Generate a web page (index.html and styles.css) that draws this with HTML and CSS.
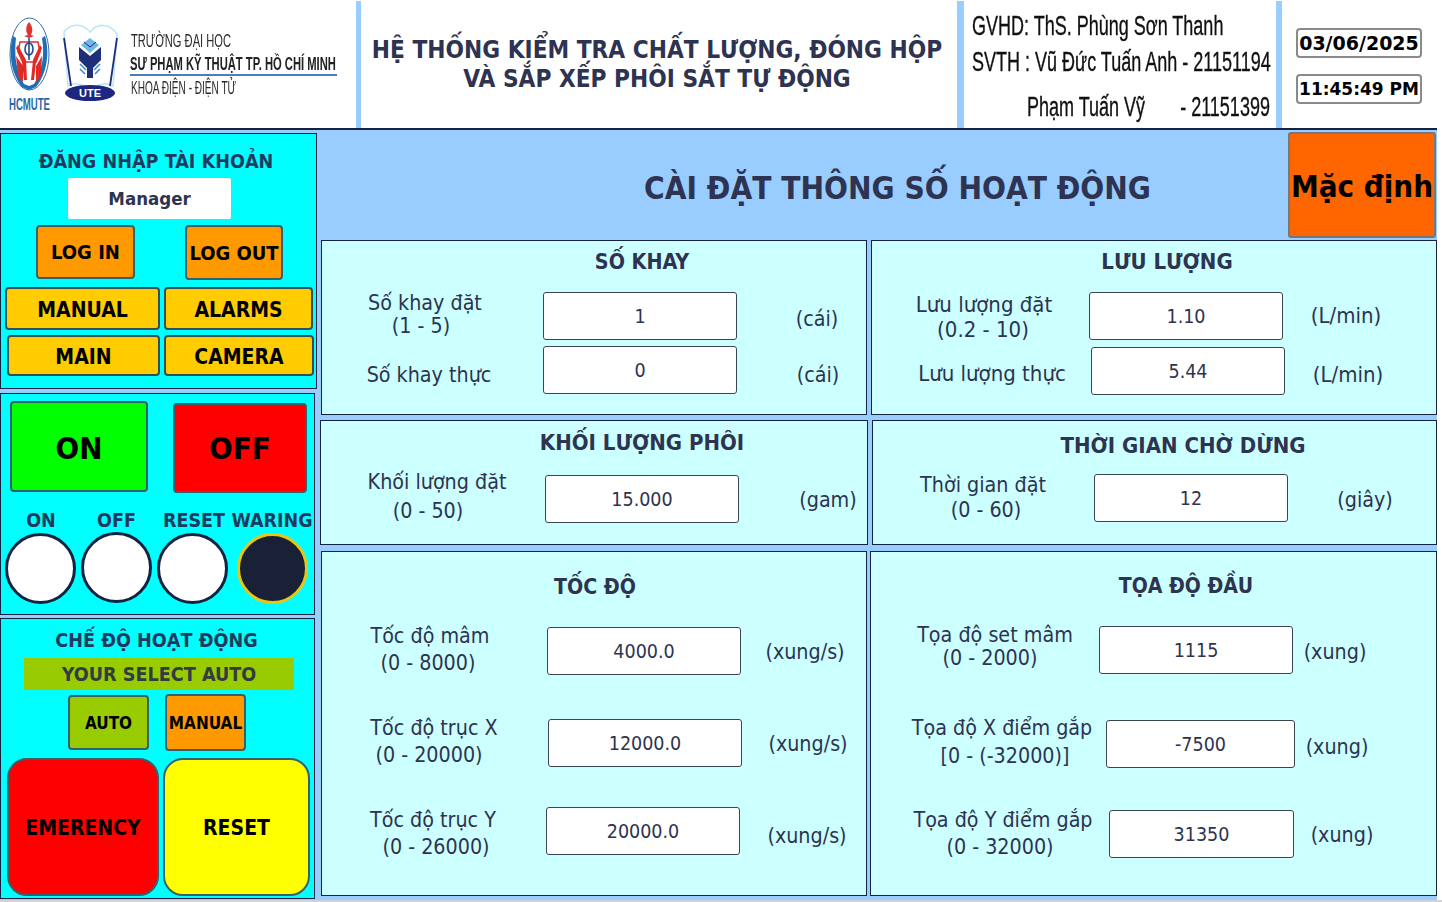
FILE: index.html
```html
<!DOCTYPE html>
<html lang="vi">
<head>
<meta charset="utf-8">
<title>HMI</title>
<link rel="stylesheet" href="styles.css">
</head>
<body>
<div class="screen">
  <header class="top">
    <div class="brand">
      <svg class="logos" viewBox="0 0 130 112" width="130" height="112" aria-hidden="true">
        <g class="soft">
          <ellipse cx="29.5" cy="54" rx="19.5" ry="36" fill="#fff" stroke="#2f6fb0" stroke-width="1"/>
          <path d="M13 36 C8 52 11 74 22 87 L29 90 L36 87 C47 74 50 52 45 36 L42 38 C45 54 42 72 34 84 L29 86 L24 84 C16 72 14 54 16 38Z" fill="#1f6db5"/>
          <path d="M29 22 C25 27 26 32 28 35 L24 36 L29 38 L34 36 L31 35 C33 31 33 27 29 22Z" fill="#e03030"/>
          <path d="M20 42 L38 42 L40 52 L36 62 L23 62 L18 52Z" fill="#fff" stroke="#d8312f" stroke-width="1.5"/>
          <ellipse cx="29" cy="49" rx="4" ry="6" fill="none" stroke="#1c4f8e" stroke-width="1.6"/>
          <path d="M29 38 V60" stroke="#1c4f8e" stroke-width="1.6"/>
          <path d="M16 48 L22 62 L24 80 L27 80 L26 60 L18 45Z M42 48 L36 62 L34 80 L31 80 L33 60 L40 45Z" fill="#e02b25"/>
          <path d="M16 56 L23 66 L23 82 L18 76 Z M42 56 L36 66 L36 82 L41 76 Z" fill="#e02b25"/>
          <path d="M64 32 C70 24 82 22 90 32 C98 22 110 24 117 34 L113 86 C106 82 98 84 90 90 C82 84 74 82 68 86Z" fill="#fff" stroke="#bfe6f5" stroke-width="1.6"/>
          <path d="M64 38 L71 86 M117 38 L110 86" stroke="#1d2f7a" stroke-width="1.8"/>
          <path d="M90 38 L99 45 L90 53 L81 45Z" fill="#6fb8e8"/>
          <path d="M79 47 L90 56 L101 47 V60 L93 68 V78 H87 V68 L79 60Z" fill="#1d2f7a"/>
          <path d="M80 64 L86 70 M80 69 L85 74 M100 64 L94 70 M100 69 L95 74" stroke="#3d8ccc" stroke-width="1.6"/>
          <path d="M84 42 L90 47 M96 42 L90 47" stroke="#1d2f7a" stroke-width="1"/>
          <ellipse cx="90" cy="93" rx="25" ry="8" fill="#1d2680"/>
        </g>
        <text x="90" y="97" class="ute">UTE</text>
        <text x="9" y="110" class="hcm" textLength="41" lengthAdjust="spacingAndGlyphs">HCMUTE</text>
      </svg>
      <div class="school">
        <p class="s1"><span class="squeeze sq-a">TRƯỜNG ĐẠI HỌC</span></p>
        <p class="s2"><span class="squeeze sq-b">SƯ PHẠM KỸ THUẬT TP. HỒ CHÍ MINH</span></p>
        <p class="s3"><span class="squeeze sq-c">KHOA ĐIỆN - ĐIỆN TỬ</span></p>
      </div>
    </div>
    <div class="sep sep-a"></div>
    <h1 class="project">HỆ THỐNG KIỂM TRA CHẤT LƯỢNG, ĐÓNG HỘP<br>VÀ SẮP XẾP PHÔI SẮT TỰ ĐỘNG</h1>
    <div class="sep sep-b"></div>
    <div class="people">
      <p class="p1"><span class="squeeze sq-p">GVHD: ThS. Phùng Sơn Thanh</span></p>
      <p class="p2"><span class="squeeze sq-p">SVTH : Vũ Đức Tuấn Anh - 21151194</span></p>
      <p class="p3"><span class="squeeze sq-p">Phạm Tuấn Vỹ &nbsp;&nbsp;&nbsp;&nbsp;&nbsp; - 21151399</span></p>
    </div>
    <div class="sep sep-c"></div>
    <div class="clock">
      <div class="stamp">03/06/2025</div>
      <div class="stamp time">11:45:49 PM</div>
    </div>
  </header>

  <div class="body">
    <aside class="side">
      <section class="box box-login">
        <h2 class="side-title t-login">ĐĂNG NHẬP TÀI KHOẢN</h2>
        <div class="user">Manager</div>
        <div class="line line-auth">
          <button class="btn orange b-in">LOG IN</button>
          <button class="btn orange b-out">LOG OUT</button>
        </div>
        <div class="line line-nav1">
          <button class="btn amber b-manual">MANUAL</button>
          <button class="btn amber b-alarms">ALARMS</button>
        </div>
        <div class="line line-nav2">
          <button class="btn amber b-main">MAIN</button>
          <button class="btn amber b-camera">CAMERA</button>
        </div>
      </section>

      <section class="box box-power">
        <div class="line line-power">
          <button class="btn big green b-on">ON</button>
          <button class="btn big red b-off">OFF</button>
        </div>
        <div class="lamps-text">
          <span class="lt lt-on">ON</span>
          <span class="lt lt-off">OFF</span>
          <span class="lt lt-reset">RESET</span>
          <span class="lt lt-war">WARING</span>
        </div>
        <div class="lamps">
          <span class="lamp l-1"></span>
          <span class="lamp l-2"></span>
          <span class="lamp l-3"></span>
          <span class="lamp l-4"></span>
        </div>
      </section>

      <section class="box box-mode">
        <h2 class="side-title t-mode">CHẾ ĐỘ HOẠT ĐỘNG</h2>
        <div class="select">YOUR SELECT AUTO</div>
        <div class="line line-mode">
          <button class="btn small lime b-auto">AUTO</button>
          <button class="btn small orange b-man2">MANUAL</button>
        </div>
        <div class="line line-stop">
          <button class="btn huge red b-em">EMERENCY</button>
          <button class="btn huge yellow b-rs">RESET</button>
        </div>
      </section>
    </aside>

    <main class="main">
      <div class="heading">
        <h2 class="heading-text">CÀI ĐẶT THÔNG SỐ HOẠT ĐỘNG</h2>
        <button class="default">Mặc định</button>
      </div>

      <div class="group g1">
        <section class="panel pa">
          <h3 class="ptitle">SỐ KHAY</h3>
          <div class="row sk1"><div class="lab"><span class="l1">Số khay đặt</span><span class="l2">(1 - 5)</span></div><div class="field">1</div><div class="unit">(cái)</div></div>
          <div class="row sk2"><div class="lab"><span class="l1">Số khay thực</span></div><div class="field">0</div><div class="unit">(cái)</div></div>
        </section>
        <section class="panel pb">
          <h3 class="ptitle">LƯU LƯỢNG</h3>
          <div class="row ll1"><div class="lab"><span class="l1">Lưu lượng đặt</span><span class="l2">(0.2 - 10)</span></div><div class="field">1.10</div><div class="unit">(L/min)</div></div>
          <div class="row ll2"><div class="lab"><span class="l1">Lưu lượng thực</span></div><div class="field">5.44</div><div class="unit">(L/min)</div></div>
        </section>
      </div>

      <div class="group g2">
        <section class="panel pc">
          <h3 class="ptitle">KHỐI LƯỢNG PHÔI</h3>
          <div class="row kl"><div class="lab"><span class="l1">Khối lượng đặt</span><span class="l2">(0 - 50)</span></div><div class="field">15.000</div><div class="unit">(gam)</div></div>
        </section>
        <section class="panel pd">
          <h3 class="ptitle">THỜI GIAN CHỜ DỪNG</h3>
          <div class="row tg"><div class="lab"><span class="l1">Thời gian đặt</span><span class="l2">(0 - 60)</span></div><div class="field">12</div><div class="unit">(giây)</div></div>
        </section>
      </div>

      <div class="group g3">
        <section class="panel pe">
          <h3 class="ptitle">TỐC ĐỘ</h3>
          <div class="row td1"><div class="lab"><span class="l1">Tốc độ mâm</span><span class="l2">(0 - 8000)</span></div><div class="field">4000.0</div><div class="unit">(xung/s)</div></div>
          <div class="row td2"><div class="lab"><span class="l1">Tốc độ trục X</span><span class="l2">(0 - 20000)</span></div><div class="field">12000.0</div><div class="unit">(xung/s)</div></div>
          <div class="row td3"><div class="lab"><span class="l1">Tốc độ trục Y</span><span class="l2">(0 - 26000)</span></div><div class="field">20000.0</div><div class="unit">(xung/s)</div></div>
        </section>
        <section class="panel pf">
          <h3 class="ptitle">TỌA ĐỘ ĐẦU</h3>
          <div class="row tv1"><div class="lab"><span class="l1">Tọa độ set mâm</span><span class="l2">(0 - 2000)</span></div><div class="field">1115</div><div class="unit">(xung)</div></div>
          <div class="row tv2"><div class="lab"><span class="l1">Tọa độ X điểm gắp</span><span class="l2">[0 - (-32000)]</span></div><div class="field">-7500</div><div class="unit">(xung)</div></div>
          <div class="row tv3"><div class="lab"><span class="l1">Tọa độ Y điểm gắp</span><span class="l2">(0 - 32000)</span></div><div class="field">31350</div><div class="unit">(xung)</div></div>
        </section>
      </div>
    </main>
  </div>
</div>
</body>
</html>
```
FILE: styles.css
```css
* { box-sizing: border-box; margin: 0; padding: 0; }
html, body { width: 1442px; height: 902px; overflow: hidden; background: #fff; }
body { font-family: "DejaVu Sans Condensed", "DejaVu Sans", sans-serif; color: #2d3350; border-bottom: 2px solid #cfd3d8; }
button { font: inherit; color: #000; cursor: pointer; }

.screen { width: 1437px; height: 900px; background: #99ccff; display: flex; flex-direction: column; }

/* header */
.top { height: 130px; flex: none; display: flex; width: 1442px; background: linear-gradient(#14233f, #14233f) 0 100% / 1437px 2px no-repeat, #fff; }
.brand { width: 356px; flex: none; display: flex; }
.logos { flex: none; display: block; }
.soft { filter: blur(.35px); }
.ute { fill: #fff; font: bold 11px "Liberation Sans", sans-serif; text-anchor: middle; }
.hcm { fill: #2a66a8; font: bold 17px "Liberation Sans", sans-serif; }
.school { flex: 1; min-width: 0; font-family: "Liberation Sans", sans-serif; color: #2b2b2b; white-space: nowrap; padding-top: 30px; }
.squeeze { display: inline-block; transform-origin: left center; white-space: nowrap; }
.sq-a { transform: scaleX(.585); }
.sq-b { transform: scaleX(.59); }
.sq-c { transform: scaleX(.53); }
.sq-p { transform: scaleX(.667); -webkit-text-stroke: .35px #111; }
.s1, .s2, .s3 { font-size: 19px; line-height: 22px; }
.s1, .s3 { padding-left: 1px; }
.s2 { line-height: 20px; height: 22px; font-weight: bold; color: #222; border-bottom: 2px solid #4a7fb5; width: 207px; margin-top: 2px; }
.s3 { margin-top: 1px; }
.sep { flex: none; background: #99ccff; margin: 1px 0 2px; }
.sep-a { width: 5px; }
.sep-b { width: 7px; }
.sep-c { width: 6px; }
.project { width: 596px; flex: none; text-align: center; font-size: 24.2px; line-height: 29px; padding: 36px 4px 0 0; font-weight: bold; color: #2d3350; white-space: nowrap; }
.people { width: 312px; flex: none; font-family: "Liberation Sans", sans-serif; font-size: 27px; color: #111; white-space: nowrap; padding-left: 8px; }
.p1 { line-height: 30px; padding-top: 11px; height: 41px; }
.p2 { line-height: 30px; margin-top: 6px; }
.p3 { line-height: 30px; margin-top: 15px; padding-left: 55px; }
.clock { flex: 1; padding: 28px 0 0 14px; display: flex; flex-direction: column; gap: 16px; }
.stamp { width: 126px; height: 30px; border: 2px solid #8a8a8a; border-radius: 4px; background: #fff; color: #000; font: bold 19px/26px "DejaVu Sans", sans-serif; text-align: center; white-space: nowrap; }
.time { font-size: 17px; }

/* layout */
.body { display: flex; flex: 1; min-height: 0; }
.side { width: 316px; flex: none; padding-top: 3px; }
.box { background: #00ffff; border: 1px solid #14233f; width: 315px; }
.box-login { height: 256px; width: 317px; }
.box-power { height: 222px; margin-top: 4px; }
.box-mode { height: 281px; margin-top: 3px; }
.side-title { font-size: 19.6px; line-height: 24px; font-weight: bold; color: #1f3a5f; text-align: center; white-space: nowrap; }
.line { display: flex; }
.btn { border: 2px solid #35606e; border-radius: 4px; font-weight: bold; flex: none; white-space: nowrap; }
.orange { background: #ff9900; }
.amber { background: #ffcc00; border-color: #33505a; }
.green { background: #00ff00; }
.red { background: #ff0000; }
.yellow { background: #ffff00; }
.lime { background: #99cc00; }

.t-login { margin-top: 16px; padding-right: 5px; }
.user { width: 163px; height: 41px; margin: 4px 0 0 67px; background: #fff; border-radius: 2px; font-size: 18.5px; font-weight: bold; line-height: 41px; text-align: center; color: #2d3350; }
.line-auth { margin: 6px 0 0 35px; gap: 50px; }
.b-in { width: 99px; height: 54px; font-size: 20px; }
.b-out { width: 98px; height: 55px; font-size: 20px; }
.line-nav1 { margin: 7px 0 0 4px; gap: 4px; }
.line-nav2 { margin: 5px 0 0 6px; gap: 4px; }
.line-nav1 .btn, .line-nav2 .btn { font-size: 21px; padding-top: 2px; }
.b-manual { width: 155px; height: 43px; }
.b-alarms { width: 149px; height: 43px; }
.b-main { width: 153px; height: 41px; }
.b-camera { width: 150px; height: 41px; }

.line-power { margin: 7px 0 0 9px; gap: 25px; align-items: flex-start; }
.big { font-size: 31px; height: 91px; }
.b-on { width: 138px; padding-top: 2px; }
.b-off { width: 134px; margin-top: 2px; height: 90px; }
.lamps-text { display: flex; margin-top: 16px; height: 24px; font-size: 19.5px; line-height: 24px; font-weight: bold; color: #1f3a5f; white-space: nowrap; }
.lt { display: block; text-align: center; flex: none; }
.lt-on { width: 80px; }
.lt-off { width: 71px; }
.lt-reset { width: 84px; }
.lt-war { width: 84px; margin-left: -6px; }
.lamps { display: flex; margin: 0 0 0 4px; gap: 5px; align-items: flex-start; }
.lamp { width: 71px; height: 71px; flex: none; border-radius: 50%; background: #fff; border: 3px solid #14233f; }
.l-2 { margin-top: -1px; }
.l-4 { margin-left: 4px; background: #1a2035; border-color: #e6c619; }

.t-mode { margin-top: 10px; padding-right: 2px; }
.select { width: 270px; height: 32px; margin: 5px 0 0 23px; background: #99cc00; font-size: 19.6px; font-weight: bold; line-height: 34px; text-align: center; color: #333c40; white-space: nowrap; }
.line-mode { margin: 4px 0 0 67px; gap: 16px; align-items: center; }
.small { font-size: 17px; width: 81px; }
.b-auto { height: 55px; }
.b-man2 { height: 57px; padding: 0; }
.line-stop { margin: 7px 0 0 6px; gap: 4px; align-items: flex-start; }
.huge { font-size: 21px; border-radius: 20px; height: 138px; padding-top: 2px; }
.b-em { width: 152px; }
.b-rs { width: 147px; }

/* main */
.main { flex: 1; display: flex; flex-direction: column; padding-left: 5px; }
.heading { height: 110px; flex: none; display: flex; }
.heading-text { width: 967px; flex: none; font-size: 31.3px; line-height: 116px; font-weight: bold; text-align: center; color: #2d3350; white-space: nowrap; padding-left: 186px; }
.default { width: 148px; height: 106px; margin-top: 2px; background: #ff6600; border: 2px solid #777; border-radius: 3px; font-size: 31px; font-weight: bold; padding: 2px 0 0; white-space: nowrap; }

.group { display: flex; flex: none; align-items: flex-start; }
.g2 { margin-top: 5px; margin-left: -1px; }
.g3 { margin-top: 6px; }
.panel { background: #ccffff; border: 1px solid #14233f; flex: none; }
.pa { width: 546px; height: 175px; }
.pb { width: 566px; height: 175px; margin-left: 4px; }
.pc { width: 548px; height: 125px; }
.pd { width: 565px; height: 125px; margin-left: 4px; }
.pe { width: 546px; height: 345px; }
.pf { width: 567px; height: 345px; margin-left: 3px; }

.ptitle { font-size: 22px; font-weight: bold; text-align: center; white-space: nowrap; color: #2d3350; }
.pa .ptitle { font-size: 21.3px; height: 51px; line-height: 42px; padding-left: 96px; }
.pb .ptitle { height: 51px; line-height: 42px; padding-left: 26px; }
.pc .ptitle { height: 54px; line-height: 44px; padding-left: 96px; }
.pd .ptitle { height: 53px; line-height: 50px; padding-left: 57px; }
.pe .ptitle { font-size: 21.2px; height: 75px; line-height: 70px; padding-left: 2px; }
.pf .ptitle { font-size: 21px; height: 74px; line-height: 68px; padding-left: 65px; }

.row { display: flex; height: 48px; align-items: flex-start; margin-top: var(--mt, 0); font-size: 21.3px; white-space: nowrap; }
.pb .row { font-size: 22px; }
.lab { flex: none; width: var(--lw); margin-top: var(--ly); line-height: var(--lh); color: #2d3350; }
.l1, .l2 { display: block; text-align: center; }
.l1 { width: var(--a); }
.l2 { width: var(--b); }
.field { flex: none; width: var(--fw, 194px); height: 48px; background: #fff; border: 1px solid #3c4450; border-radius: 3px; font-size: 19.5px; line-height: 48px; text-align: center; color: #2d3350; }
.unit { flex: none; width: var(--uw); margin-top: var(--uy); line-height: 26px; text-align: center; color: #2d3350; }

.sk1 { --lw: 221px; --a: 206px; --b: 198px; --lh: 23px; --ly: -1.5px; --uw: 160px; --uy: 14px; }
.sk2 { --mt: 6px; --lw: 221px; --a: 214px; --b: 214px; --lh: 26px; --ly: 16px; --uw: 162px; --uy: 16px; }
.ll1 { --lw: 217px; --a: 224px; --b: 222px; --lh: 25px; --ly: -.5px; --uw: 126px; --uy: 11px; }
.ll2 { --mt: 7px; --lw: 219px; --a: 240px; --b: 240px; --lh: 26px; --ly: 14px; --uw: 126px; --uy: 15px; }
.kl { --lw: 224px; --a: 232px; --b: 214px; --lh: 29px; --ly: -8.5px; --uw: 178px; --uy: 12px; }
.tg { --lw: 221px; --a: 220px; --b: 226px; --lh: 25px; --ly: -2.5px; --uw: 154px; --uy: 13px; }
.td1 { --lw: 225px; --a: 216px; --b: 212px; --lh: 27px; --ly: -5.5px; --uw: 128px; --uy: 12px; }
.td2 { --mt: 44px; --lw: 226px; --a: 224px; --b: 214px; --lh: 27px; --ly: -5.5px; --uw: 132px; --uy: 12px; }
.td3 { --mt: 40px; --lw: 224px; --a: 222px; --b: 228px; --lh: 27px; --ly: -1.5px; --uw: 134px; --uy: 16px; }
.tv1 { --lw: 228px; --a: 248px; --b: 238px; --lh: 23px; --ly: -3.5px; --uw: 84px; --uy: 13px; }
.tv2 { --mt: 46px; --lw: 235px; --fw: 189px; --a: 262px; --b: 268px; --lh: 28px; --ly: -6px; --uw: 84px; --uy: 14px; }
.tv3 { --mt: 42px; --lw: 238px; --fw: 185px; --a: 264px; --b: 258px; --lh: 27px; --ly: -4.5px; --uw: 96px; --uy: 12px; }
```
